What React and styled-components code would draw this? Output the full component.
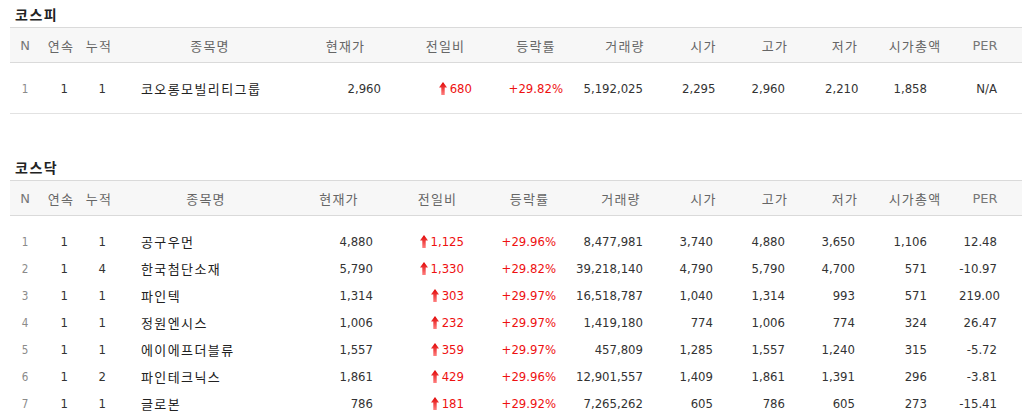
import React from 'react';
import styled, { createGlobalStyle } from 'styled-components';

const Global = createGlobalStyle`
  body {
    margin: 0;
    background: #fff;
    font-family: "DejaVu Sans Condensed", "DejaVu Sans", "Noto Sans CJK KR", sans-serif;
    color: #333;
  }
`;

const Page = styled.div`
  display: flex;
  flex-direction: column;
  padding: 0 12px 0 10px;
`;

const Section = styled.section`
  display: flex;
  flex-direction: column;
  margin-bottom: 39px;
`;

const Title = styled.h3`
  margin: 0;
  height: 27px;
  line-height: 28px;
  padding-left: 5px;
  font-family: "Noto Sans CJK KR", sans-serif;
  font-size: 14px;
  font-weight: 700;
  letter-spacing: 1.5px;
  color: #222;
`;

const Head = styled.div`
  display: grid;
  grid-template-columns: ${p => p.cols};
  height: 34px;
  align-items: center;
  background: #f7f7f7;
  border-top: 1px solid #dadada;
  border-bottom: 1px solid #dadada;
`;

const HeadCell = styled.div`
  text-align: center;
  white-space: nowrap;
  font-family: ${p => p.latin ? '"DejaVu Sans", sans-serif' : '"Noto Sans CJK KR", sans-serif'};
  font-size: 13px;
  font-weight: 400;
  letter-spacing: ${p => p.latin ? '0' : '1.2px'};
  color: ${p => p.latin ? '#777' : '#666'};
`;

const Body = styled.div`
  display: flex;
  flex-direction: column;
  padding: 12px 0 11px;
  border-bottom: 1px solid #e2e2e2;
`;

const Row = styled.div`
  display: grid;
  grid-template-columns: ${p => p.cols};
  height: 27px;
  align-items: center;
`;

const Cell = styled.div`
  white-space: nowrap;
  font-size: 13px;
  text-align: ${p => p.align || 'right'};
  padding-right: ${p => p.pr || 0}px;
  padding-left: ${p => p.pl || 0}px;
  color: ${p => p.red ? '#ee1111' : '#333'};
`;

const Rank = styled(Cell)`
  color: #8a8a8a;
  font-size: 11.5px;
`;

const Name = styled(Cell)`
  font-family: "Noto Sans CJK KR", sans-serif;
  letter-spacing: 1.4px;
  color: #222;
`;

const Change = styled(Cell)`
  display: flex;
  justify-content: flex-end;
  align-items: center;
  gap: 3px;
  color: #ee1111;
`;

const Arrow = () => (
  <svg width="8" height="13" viewBox="0 0 8 13">
    <defs>
      <linearGradient id="ag" x1="0" y1="0" x2="0" y2="1">
        <stop offset="0" stopColor="#e00000" />
        <stop offset="1" stopColor="#ff8080" />
      </linearGradient>
    </defs>
    <path d="M4 0 L8 5.5 L5.7 5.5 L5.7 13 L2.3 13 L2.3 5.5 L0 5.5 Z" fill="url(#ag)" />
  </svg>
);

const heads = ['N', '연속', '누적', '종목명', '현재가', '전일비', '등락률', '거래량', '시가', '고가', '저가', '시가총액', 'PER'];

const kospi = {
  title: '코스피',
  widths: [30, 42, 34, 188, 83, 117, 64, 114, 43, 100, 40, 100, 40],
  pad: [0, 14, 10, 25, 6, 32, 5, 39, 12, 40, 10, 38, 8],
  rows: [
    ['1', '1', '1', '코오롱모빌리티그룹', '2,960', '680', '+29.82%', '5,192,025', '2,295', '2,960', '2,210', '1,858', 'N/A'],
  ],
};

const kosdaq = {
  title: '코스닥',
  widths: [30, 42, 34, 180, 86, 111, 73, 110, 55, 88, 52, 88, 52],
  pad: [0, 14, 10, 25, 9, 29, 10, 33, 18, 34, 16, 32, 14],
  rows: [
    ['1', '1', '1', '공구우먼', '4,880', '1,125', '+29.96%', '8,477,981', '3,740', '4,880', '3,650', '1,106', '12.48'],
    ['2', '1', '4', '한국첨단소재', '5,790', '1,330', '+29.82%', '39,218,140', '4,790', '5,790', '4,700', '571', '-10.97'],
    ['3', '1', '1', '파인텍', '1,314', '303', '+29.97%', '16,518,787', '1,040', '1,314', '993', '571', '219.00'],
    ['4', '1', '1', '정원엔시스', '1,006', '232', '+29.97%', '1,419,180', '774', '1,006', '774', '324', '26.47'],
    ['5', '1', '1', '에이에프더블류', '1,557', '359', '+29.97%', '457,809', '1,285', '1,557', '1,240', '315', '-5.72'],
    ['6', '1', '2', '파인테크닉스', '1,861', '429', '+29.96%', '12,901,557', '1,409', '1,861', '1,391', '296', '-3.81'],
    ['7', '1', '1', '글로본', '786', '181', '+29.92%', '7,265,262', '605', '786', '605', '273', '-15.41'],
  ],
};

function Market({ data }) {
  const cols = data.widths.map(w => w + 'px').join(' ') + ' 1fr';
  const p = data.pad;
  return (
    <Section>
      <Title>{data.title}</Title>
      <Head cols={cols}>
        {heads.map(h => (
          <HeadCell key={h} latin={h === 'N' || h === 'PER'}>{h}</HeadCell>
        ))}
      </Head>
      <Body>
        {data.rows.map(r => (
          <Row key={r[0]} cols={cols}>
            <Rank align="center">{r[0]}</Rank>
            <Cell pr={p[1]}>{r[1]}</Cell>
            <Cell pr={p[2]}>{r[2]}</Cell>
            <Name align="left" pl={p[3]}>{r[3]}</Name>
            <Cell pr={p[4]}>{r[4]}</Cell>
            <Change pr={p[5]}><Arrow />{r[5]}</Change>
            <Cell pr={p[6]} red>{r[6]}</Cell>
            <Cell pr={p[7]}>{r[7]}</Cell>
            <Cell pr={p[8]}>{r[8]}</Cell>
            <Cell pr={p[9]}>{r[9]}</Cell>
            <Cell pr={p[10]}>{r[10]}</Cell>
            <Cell pr={p[11]}>{r[11]}</Cell>
            <Cell pr={p[12]}>{r[12]}</Cell>
          </Row>
        ))}
      </Body>
    </Section>
  );
}

export default function App() {
  return (
    <Page>
      <Global />
      <Market data={kospi} />
      <Market data={kosdaq} />
    </Page>
  );
}
